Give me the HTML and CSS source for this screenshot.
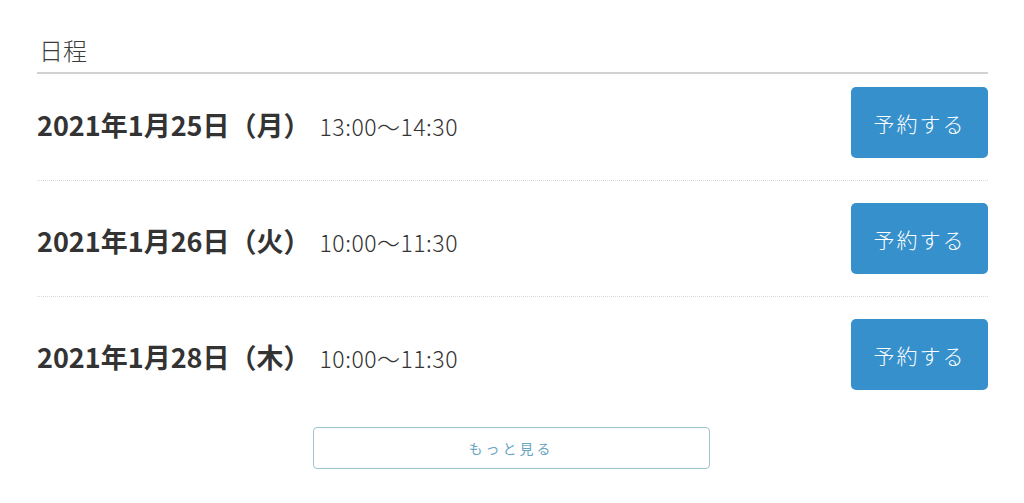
FILE: index.html
```html
<!DOCTYPE html>
<html lang="ja">
<head>
<meta charset="utf-8">
<link rel="stylesheet" href="styles.css">
</head>
<body>
<div class="wrap">
  <h2 class="title">日程</h2>
  <ul class="list">
    <li class="row">
      <div class="when"><span class="date">2021年1月25日（月）</span><span class="time">13:00〜14:30</span></div>
      <a class="btn">予約する</a>
    </li>
    <li class="row">
      <div class="when"><span class="date">2021年1月26日（火）</span><span class="time">10:00〜11:30</span></div>
      <a class="btn">予約する</a>
    </li>
    <li class="row last">
      <div class="when"><span class="date">2021年1月28日（木）</span><span class="time">10:00〜11:30</span></div>
      <a class="btn">予約する</a>
    </li>
  </ul>
  <div class="more-wrap"><a class="more">もっと見る</a></div>
</div>
</body>
</html>
```
FILE: styles.css
```css
* { box-sizing: border-box; }
body {
  margin: 0;
  background: #fff;
  font-family: "Noto Sans CJK JP", "Noto Sans", sans-serif;
  color: #333;
}
.wrap {
  padding: 0 36px 0 37px;
}
.title {
  margin: 0;
  padding-top: 33px;
  padding-left: 2px;
  font-size: 24px;
  font-weight: 300;
  line-height: 34px;
  color: #3a3a3a;
  border-bottom: 2px solid #d2d2d2;
  height: 74px;
}
.list {
  list-style: none;
  margin: 0;
  padding: 0;
}
.row {
  display: flex;
  align-items: center;
  justify-content: space-between;
  padding: 22px 0;
  border-bottom: 1px dotted #d8d8d8;
}
.row:first-child { padding-top: 13px; }
.row.last { border-bottom: none; }
.when {
  display: flex;
  align-items: baseline;
  padding-top: 4px;
}
.date {
  font-size: 27px;
  font-weight: 700;
  color: #333;
}
.time {
  font-size: 23px;
  font-weight: 300;
  letter-spacing: 0.5px;
  margin-left: 9px;
  color: #333;
}
.btn {
  display: flex;
  align-items: center;
  justify-content: center;
  width: 137px;
  height: 71px;
  background: #3590cc;
  color: #fff;
  border-radius: 5px;
  font-size: 21px;
  font-weight: 300;
  letter-spacing: 2px;
}
.more-wrap {
  display: flex;
  justify-content: center;
  padding-top: 15px;
  padding-right: 3px;
}
.more {
  display: flex;
  align-items: center;
  justify-content: center;
  width: 397px;
  height: 42px;
  border: 1px solid #9ec3cf;
  border-radius: 4px;
  color: #6aa5c0;
  font-size: 14px;
  letter-spacing: 3px;
}
```
